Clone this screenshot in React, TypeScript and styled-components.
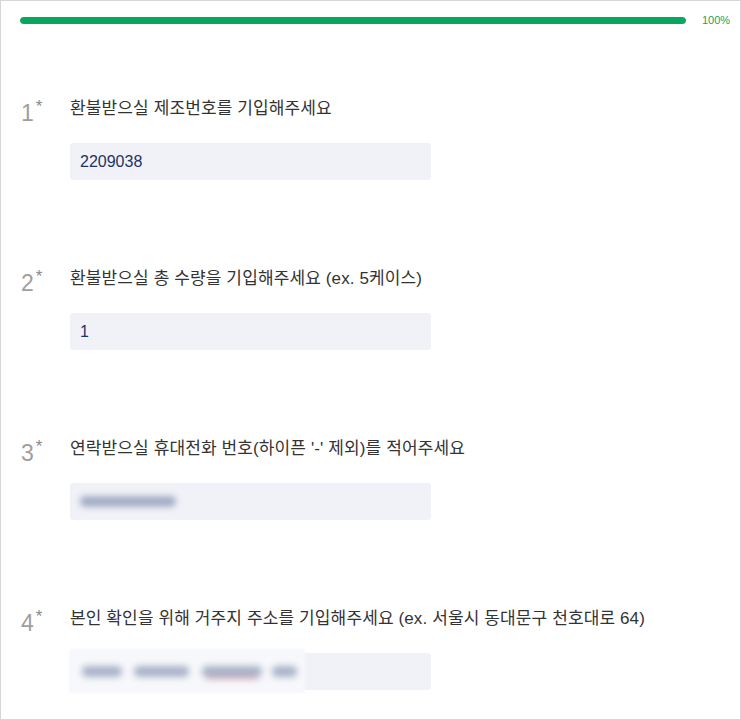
import React from "react";
import styled, { createGlobalStyle } from "styled-components";

const Global = createGlobalStyle`
  html, body { margin: 0; padding: 0; background: #fff; }
  body { font-family: "Liberation Sans", "Noto Sans CJK KR", sans-serif; }
  * { box-sizing: border-box; }
`;

const Frame = styled.div`
  width: 741px;
  height: 720px;
  border: 1px solid #d6d6d6;
  overflow: hidden;
  display: flex;
  flex-direction: column;
`;

const ProgressRow = styled.div`
  display: flex;
  align-items: center;
  padding: 13px 8px 0 19px;
  gap: 16px;
`;

const Track = styled.div`
  flex: 1;
  height: 7px;
  border-radius: 4px;
  background: #e6e6e6;
  overflow: hidden;
`;

const Fill = styled.div`
  height: 100%;
  background: #0aa55e;
  border-radius: 4px;
`;

const Percent = styled.span`
  font-size: 11px;
  color: #16a35f;
  width: 30px;
`;

const List = styled.div`
  display: flex;
  flex-direction: column;
  gap: 89px;
  padding-top: 73px;
`;

const Question = styled.div`
  display: grid;
  grid-template-columns: 49px 1fr;
  padding-left: 20px;
  position: relative;
`;

const Num = styled.div`
  font-size: 23px;
  color: #9e9e9e;
  line-height: 1;
  padding-top: 3px;
  display: flex;
  align-items: flex-start;
`;

const Star = styled.span`
  font-size: 17px;
  color: #8a8a8a;
  margin-left: 2px;
  margin-top: -4px;
`;

const Body = styled.div`
  display: flex;
  flex-direction: column;
  gap: 24px;
`;

const Label = styled.div`
  font-size: 17px;
  letter-spacing: 0.12px;
  color: #333;
  line-height: 20px;
`;

const InputBox = styled.div`
  width: 361px;
  height: 37px;
  background: #f1f2f7;
  border-radius: 3px;
  display: flex;
  align-items: center;
  padding-left: 10px;
  font-size: 16px;
  color: #1e3364;
  position: relative;
`;

const Blurred = styled.span<{ $w: number }>`
  display: inline-block;
  width: ${(p) => p.$w}px;
  height: 11px;
  border-radius: 5px;
  background: #a3aec6;
  filter: blur(3px);
`;

const Overlay = styled.div`
  position: absolute;
  left: -1px;
  top: -4px;
  width: 236px;
  height: 44px;
  background: #f7f8fb;
  filter: blur(1px);
  display: flex;
  align-items: center;
  padding-left: 13px;
`;

const Chunk = styled.span<{ $w: number; $gap: number; $red?: boolean }>`
  display: inline-block;
  width: ${(p) => p.$w}px;
  margin-right: ${(p) => p.$gap}px;
  height: 11px;
  border-radius: 5px;
  background: #a8b2c8;
  filter: blur(3px);
  box-shadow: ${(p) => (p.$red ? "0 6px 0 -4px #e09aaa" : "none")};
`;

export default function App() {
  return (
    <>
      <Global />
      <Frame>
        <ProgressRow>
          <Track>
            <Fill style={{ width: "100%" }} />
          </Track>
          <Percent>100%</Percent>
        </ProgressRow>
        <List>
          <Question>
            <Num>1<Star>*</Star></Num>
            <Body>
              <Label>환불받으실 제조번호를 기입해주세요</Label>
              <InputBox>2209038</InputBox>
            </Body>
          </Question>
          <Question>
            <Num>2<Star>*</Star></Num>
            <Body>
              <Label>환불받으실 총 수량을 기입해주세요 (ex. 5케이스)</Label>
              <InputBox>1</InputBox>
            </Body>
          </Question>
          <Question>
            <Num>3<Star>*</Star></Num>
            <Body>
              <Label>연락받으실 휴대전화 번호(하이픈 '-' 제외)를 적어주세요</Label>
              <InputBox>
                <Blurred $w={96} />
              </InputBox>
            </Body>
          </Question>
          <Question>
            <Num>4<Star>*</Star></Num>
            <Body>
              <Label>본인 확인을 위해 거주지 주소를 기입해주세요 (ex. 서울시 동대문구 천호대로 64)</Label>
              <InputBox>
                <Overlay>
                  <Chunk $w={40} $gap={12} />
                  <Chunk $w={55} $gap={13} />
                  <Chunk $w={60} $gap={10} $red />
                  <Chunk $w={25} $gap={0} />
                </Overlay>
              </InputBox>
            </Body>
          </Question>
        </List>
      </Frame>
    </>
  );
}
